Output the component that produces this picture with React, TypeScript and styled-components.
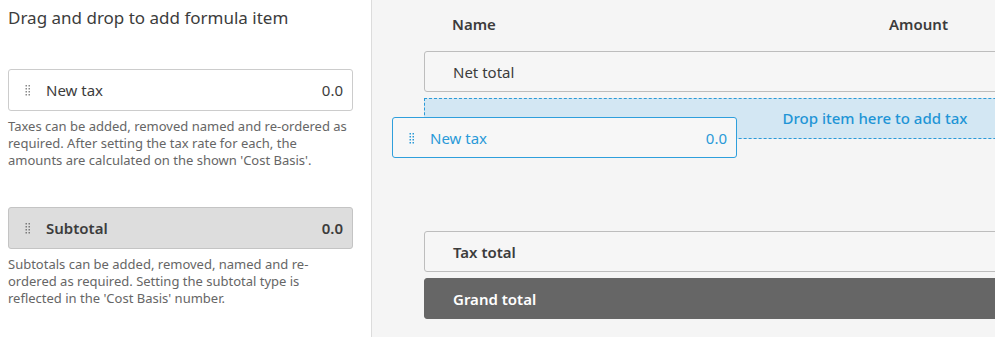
import React from "react";
import styled, { createGlobalStyle } from "styled-components";

const Global = createGlobalStyle`
  html, body { margin: 0; padding: 0; }
  body { font-family: "Noto Sans", "Open Sans", sans-serif; color: #3c3c3c; }
  * { box-sizing: border-box; }
`;

const Page = styled.div`
  display: grid;
  grid-template-columns: 372px 1fr;
  height: 337px;
  width: 995px;
  overflow: hidden;
`;

const LeftPanel = styled.div`
  background: #ffffff;
  border-right: 1px solid #dcdcdc;
  padding: 6px 18px 0 8px;
  display: flex;
  flex-direction: column;
`;

const Title = styled.h2`
  margin: 0;
  font-size: 17px;
  font-weight: 400;
  line-height: 24px;
  color: #3c3c3c;
`;

const ItemBox = styled.div<{ $variant: "plain" | "sub" | "drag" }>`
  display: flex;
  align-items: center;
  height: ${(p) => (p.$variant === "drag" ? "41px" : "42px")};
  padding: 0 9px 0 16px;
  border-radius: 3px;
  border: 1px solid
    ${(p) => (p.$variant === "drag" ? "#2f9fdc" : p.$variant === "sub" ? "#c4c4c4" : "#cccccc")};
  background: ${(p) => (p.$variant === "sub" ? "#dddddd" : p.$variant === "drag" ? "#f7f7f7" : "#ffffff")};
  color: ${(p) => (p.$variant === "drag" ? "#2a9ad8" : "#3c3c3c")};
  font-size: 15px;
  font-weight: ${(p) => (p.$variant === "sub" ? 600 : 400)};
`;

const ItemLabel = styled.span`
  flex: 1;
  margin-left: 15px;
`;

const ItemValue = styled.span``;

const Note = styled.p`
  margin: 7px 0 0;
  max-width: 342px;
  font-size: 13px;
  line-height: 17px;
  color: #666666;
`;

const LeftBlock = styled.div<{ $top: number }>`
  margin-top: ${(p) => p.$top}px;
`;

const RightPanel = styled.div`
  position: relative;
  background: #f5f5f5;
  padding: 10px 0 0 52px;
  overflow: hidden;
`;

const Rows = styled.div`
  width: 902px;
  display: flex;
  flex-direction: column;
  gap: 6px;
`;

const HeaderRow = styled.div`
  display: grid;
  grid-template-columns: 437px 1fr;
  padding-left: 28px;
  height: 27px;
  align-items: center;
  font-size: 15px;
  font-weight: 600;
  color: #3c3c3c;
  margin-bottom: 8px;
`;

const Row = styled.div<{ $kind: "plain" | "bold" | "grand" }>`
  height: 41px;
  display: flex;
  align-items: center;
  padding-left: 28px;
  border-radius: 3px;
  border: 1px solid ${(p) => (p.$kind === "grand" ? "#666666" : "#bdbdbd")};
  background: ${(p) => (p.$kind === "grand" ? "#666666" : "#f6f6f6")};
  color: ${(p) => (p.$kind === "grand" ? "#ffffff" : "#3c3c3c")};
  font-size: 15px;
  font-weight: ${(p) => (p.$kind === "plain" ? 400 : 600)};
`;

const DropZone = styled.div`
  height: 41px;
  display: flex;
  align-items: center;
  justify-content: center;
  border: 1px dashed #2a9ad8;
  background: #d3e7f3;
  color: #1f95d6;
  font-size: 15px;
  font-weight: 500;
  padding-bottom: 1px;
`;

const Spacer = styled.div`
  height: 80px;
`;

const Ghost = styled.div`
  position: absolute;
  left: 20px;
  top: 117px;
  width: 345px;
`;

const Handle = ({ color }: { color: string }) => (
  <svg width="6" height="12" viewBox="0 0 6 12" style={{ flexShrink: 0 }}>
    {[0, 3, 6, 9].map((y) =>
      [0, 3].map((x) => (
        <rect key={`${x}-${y}`} x={x + 0.5} y={y + 1} width="1.5" height="1.5" fill={color} />
      ))
    )}
  </svg>
);

export default function App() {
  return (
    <>
      <Global />
      <Page>
        <LeftPanel>
          <Title>Drag and drop to add formula item</Title>
          <LeftBlock $top={39}>
            <ItemBox $variant="plain">
              <Handle color="#8a8a8a" />
              <ItemLabel>New tax</ItemLabel>
              <ItemValue>0.0</ItemValue>
            </ItemBox>
            <Note>
              Taxes can be added, removed named and re-ordered as required. After setting the tax
              rate for each, the amounts are calculated on the shown 'Cost Basis'.
            </Note>
          </LeftBlock>
          <LeftBlock $top={38}>
            <ItemBox $variant="sub">
              <Handle color="#7a7a7a" />
              <ItemLabel>Subtotal</ItemLabel>
              <ItemValue>0.0</ItemValue>
            </ItemBox>
            <Note>
              Subtotals can be added, removed, named and re-ordered as required. Setting the
              subtotal type is reflected in the 'Cost Basis' number.
            </Note>
          </LeftBlock>
        </LeftPanel>
        <RightPanel>
          <Rows>
            <HeaderRow>
              <span>Name</span>
              <span>Amount</span>
            </HeaderRow>
            <Row $kind="plain">Net total</Row>
            <DropZone>Drop item here to add tax</DropZone>
            <Spacer />
            <Row $kind="bold">Tax total</Row>
            <Row $kind="grand">Grand total</Row>
          </Rows>
          <Ghost>
            <ItemBox $variant="drag">
              <Handle color="#2a9ad8" />
              <ItemLabel>New tax</ItemLabel>
              <ItemValue>0.0</ItemValue>
            </ItemBox>
          </Ghost>
        </RightPanel>
      </Page>
    </>
  );
}
